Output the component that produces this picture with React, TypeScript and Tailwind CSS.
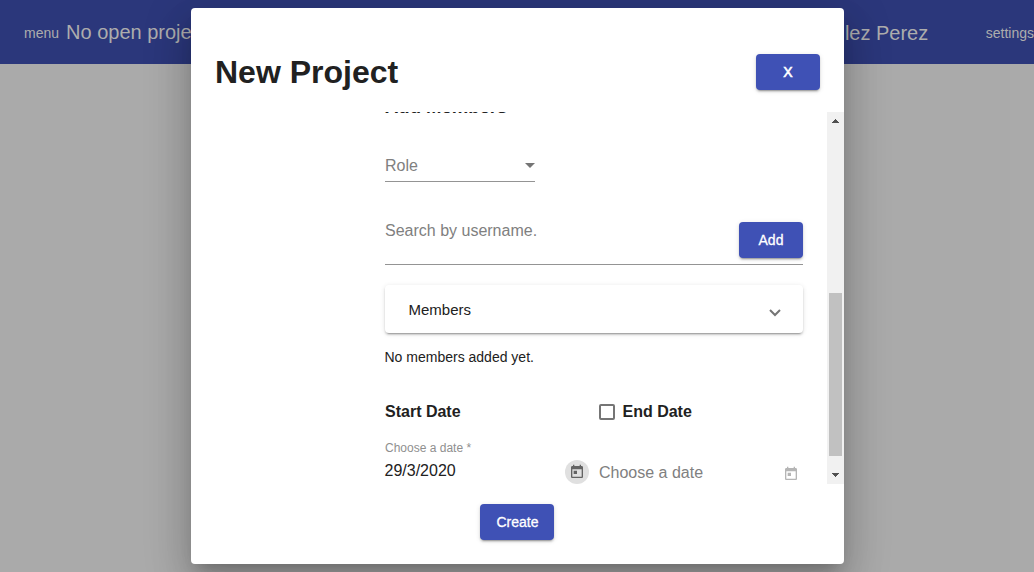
import React from "react";

const buttonShadow =
  "shadow-[0_3px_1px_-2px_rgba(0,0,0,0.2),0_2px_2px_0_rgba(0,0,0,0.14),0_1px_5px_0_rgba(0,0,0,0.12)]";

function RaisedButton({ children, className }: { children: React.ReactNode; className: string }) {
  return (
    <button
      className={`flex h-9 shrink-0 items-center justify-center rounded-[4px] bg-[#3f51b5] text-[14px] text-white ${buttonShadow} ${className}`}
    >
      {children}
    </button>
  );
}

function TodayIcon({ className }: { className: string }) {
  return (
    <svg viewBox="0 0 24 24" className={`size-4 fill-current ${className}`}>
      <path d="M19 3h-1V1h-2v2H8V1H6v2H5c-1.11 0-1.99.9-1.99 2L3 19c0 1.1.89 2 2 2h14c1.1 0 2-.9 2-2V5c0-1.1-.9-2-2-2zm0 16H5V8h14v11zM7 10h5v5H7z" />
    </svg>
  );
}

function Scrollbar() {
  return (
    <div className="flex w-[17px] flex-col items-center bg-[#f1f1f1]">
      <svg viewBox="0 0 17 17" className="size-[17px] fill-[#505050]" shapeRendering="crispEdges">
        <path d="M8 7h1v1h1v1h1v1h1v1H5v-1h1V9h1V8h1z" />
      </svg>
      <div className="mt-[164px] h-[163px] w-[13px] bg-[#c1c1c1]" />
      <svg viewBox="0 0 17 17" className="mt-[11px] size-[17px] fill-[#505050]" shapeRendering="crispEdges">
        <path d="M5 6h7v1h-1v1h-1v1H9v1H8V9H7V8H6V7H5z" />
      </svg>
    </div>
  );
}

function MembersForm() {
  return (
    <div className="ml-[194px] flex w-[418px] shrink-0 flex-col">
      <h3 className="-mt-[15px] h-5 shrink-0 text-[18.5px] leading-5 font-bold">Add Members</h3>

      <div className="mt-[39px] flex h-[26px] w-[150px] shrink-0 justify-between border-b border-[#949494] text-[16px] leading-5 text-[#808080]">
        <span>Role</span>
        <svg viewBox="0 0 10 5" className="mt-[7px] h-[5px] w-[10px] fill-[#757575]">
          <path d="M0 0h10L5 5z" />
        </svg>
      </div>

      <div className="mt-[38px] flex h-[45px] shrink-0 justify-between border-b border-[#949494]">
        <span className="mt-px text-[16px] leading-5 text-[#808080]">Search by username.</span>
        <RaisedButton className="mt-0.5 w-16 [-webkit-text-stroke:0.3px_white]">Add</RaisedButton>
      </div>

      <div
        className={`mt-5 flex h-12 shrink-0 items-center justify-between rounded-[4px] pr-[22px] pl-[23.5px] text-[15px] leading-5 ${buttonShadow}`}
      >
        <span className="pt-0.5">Members</span>
        <svg viewBox="0 0 12 8" className="mt-2 h-2 w-3 fill-none stroke-[#757575]" strokeWidth="2">
          <path d="M1 1l5 5 5-5" />
        </svg>
      </div>

      <p className="mt-[14px] -ml-[0.5px] shrink-0 text-[14px] leading-5">No members added yet.</p>

      <div className="mt-[35px] flex h-5 shrink-0 text-[16px] leading-5 font-bold">
        <span className="w-[214px]">Start Date</span>
        <span className="mt-[2px] size-4 rounded-[2px] border-2 border-[#757575]" />
        <span className="ml-[7.5px]">End Date</span>
      </div>

      <div className="mt-[18px] flex h-[44px] shrink-0 text-[16px] leading-5">
        <div className="flex w-[180px] flex-col">
          <label className="text-[12px] leading-4 text-[#8f8f8f]">Choose a date *</label>
          <span className="mt-[5px] -ml-[0.5px]">29/3/2020</span>
        </div>
        <div className="mt-5 flex size-6 items-center justify-center rounded-full bg-[#e0e0e0]">
          <TodayIcon className="text-[#636363]" />
        </div>
        <span className="mt-[23px] ml-[10px] w-[184px] text-[#808080]">Choose a date</span>
        <TodayIcon className="mt-[26px] text-[#b5b5b5]" />
      </div>
    </div>
  );
}

export default function App() {
  return (
    <div className="relative h-[572px] w-full overflow-hidden bg-[#aaaaaa] font-['Liberation_Sans',Arial,sans-serif] text-[#212121]">
      <header className="flex h-16 items-center justify-between bg-[#2b377b] pl-6 text-[20px] text-[#adadad]">
        <div className="flex items-center gap-[7px]">
          <span className="pt-0.5 text-[14px]">menu</span>
          <span>No open project</span>
        </div>
        <div className="flex items-center gap-[57.5px]">
          <span className="pt-0.5">lez Perez</span>
          <span className="pt-0.5 text-[14px]">settings</span>
        </div>
      </header>

      <div className="absolute inset-0 flex items-start pt-2 pl-[191px]">
        <section className="flex h-[556px] w-[653px] flex-col rounded-[4px] bg-white shadow-[0_11px_15px_-7px_rgba(0,0,0,0.2),0_24px_38px_3px_rgba(0,0,0,0.14),0_9px_46px_8px_rgba(0,0,0,0.12)]">
          <div className="flex h-[104px] shrink-0 items-center justify-between pt-6 pr-6 pl-6">
            <h1 className="text-[32px] leading-10 font-bold">New Project</h1>
            <RaisedButton className="w-16 [-webkit-text-stroke:0.6px_white]">X</RaisedButton>
          </div>
          <div className="flex h-[372px] shrink-0 justify-between overflow-hidden">
            <MembersForm />
            <Scrollbar />
          </div>
          <div className="flex pt-5 pl-[289px]">
            <RaisedButton className="w-[74px] pl-px [-webkit-text-stroke:0.3px_white]">Create</RaisedButton>
          </div>
        </section>
      </div>
    </div>
  );
}
